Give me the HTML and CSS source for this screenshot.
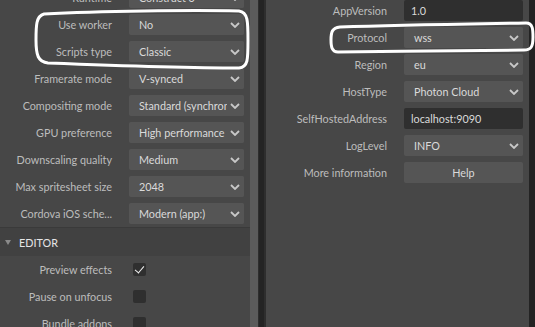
FILE: index.html
```html
<!DOCTYPE html>
<html>
<head>
    <title>Project properties</title>
    <link rel="stylesheet" href="styles.css">
</head>
<body>
    <div class="window">
        <!-- Left properties panel -->
        <div class="panel left">
            <div class="props">
                <div class="row"><span class="label">Runtime</span><div class="select">Construct 3</div></div>
                <div class="row"><span class="label">Use worker</span><div class="select">No</div></div>
                <div class="row"><span class="label">Scripts type</span><div class="select">Classic</div></div>
                <div class="row"><span class="label">Framerate mode</span><div class="select">V-synced</div></div>
                <div class="row"><span class="label">Compositing mode</span><div class="select">Standard (synchronous)</div></div>
                <div class="row"><span class="label">GPU preference</span><div class="select">High performance</div></div>
                <div class="row"><span class="label">Downscaling quality</span><div class="select">Medium</div></div>
                <div class="row"><span class="label">Max spritesheet size</span><div class="select">2048</div></div>
                <div class="row"><span class="label">Cordova iOS sche...</span><div class="select">Modern (app:)</div></div>
            </div>
            <div class="section-head"><span class="tri"></span>EDITOR</div>
            <div class="props checks">
                <div class="row"><span class="label">Preview effects</span><span class="check on"></span></div>
                <div class="row"><span class="label">Pause on unfocus</span><span class="check"></span></div>
                <div class="row"><span class="label">Bundle addons</span><span class="check"></span></div>
            </div>
        </div>
        <div class="scroll-track"></div>
        <div class="splitter"></div>

        <!-- Right properties panel -->
        <div class="panel right">
            <div class="props">
                <div class="row"><span class="label">AppVersion</span><div class="text">1.0</div></div>
                <div class="row"><span class="label">Protocol</span><div class="select">wss</div></div>
                <div class="row"><span class="label">Region</span><div class="select">eu</div></div>
                <div class="row"><span class="label">HostType</span><div class="select">Photon Cloud</div></div>
                <div class="row"><span class="label">SelfHostedAddress</span><div class="text">localhost:9090</div></div>
                <div class="row"><span class="label">LogLevel</span><div class="select">INFO</div></div>
                <div class="row"><span class="label">More information</span><div class="button">Help</div></div>
            </div>
        </div>
        <div class="edge"></div>

        <!-- hand drawn highlight marks -->
        <svg class="marks" viewBox="0 0 535 327" width="535" height="327">
            <path d="M44 14 C100 11 190 10 239 11 C248 12 248 22 248 40 C248 60 248 67 239 68 C180 68 100 65 48 63 C38 62 36 55 36 40 C36 26 36 16 44 14 Z"/>
            <path d="M340 27 C400 25 470 24 526 23 C533 23 533 30 533 37 C533 47 531 50 524 50 C470 51 400 51 338 52 C332 52 331 47 331 40 C331 32 332 28 340 27 Z"/>
        </svg>
    </div>
</body>
</html>
```

FILE: styles.css
```css
body {
    margin: 0;
    background: #464646;
    font-family: Lato, "Noto Sans", sans-serif;
    font-size: 10.8px;
}
.window {
    position: relative;
    display: flex;
    width: 535px;
    height: 327px;
    overflow: hidden;
}
.panel {
    background: #474747;
    overflow: hidden;
}
.left {
    width: 250px;
}
.right {
    width: 263px;
}
.scroll-track {
    width: 8px;
    background: #5b5b5b;
}
.splitter {
    width: 8px;
    background: #242424;
    border-left: 1px solid #2e2e2e;
    border-right: 2px solid #2e2e2e;
    box-sizing: border-box;
}
.edge {
    width: 6px;
    background: #232323;
}
.props {
    display: flex;
    flex-direction: column;
    gap: 6px;
}
.left .props:first-child {
    margin-top: -13px;
}
.row {
    display: grid;
    align-items: center;
    height: 21px;
}
.left .row {
    grid-template-columns: 112px 115px;
    column-gap: 17px;
}
.right .row {
    grid-template-columns: 121px 119px;
    column-gap: 17px;
}
.label {
    color: #bdbdbd;
    text-align: right;
    white-space: nowrap;
}
.select, .text, .button {
    height: 21px;
    line-height: 21px;
    border-radius: 2px;
    color: #dadada;
    white-space: nowrap;
    overflow: hidden;
    box-sizing: border-box;
}
.select {
    position: relative;
    background: #555555;
    padding: 0 18px 0 10px;
}
.select::after {
    content: "";
    position: absolute;
    right: 0;
    top: 0;
    width: 17px;
    height: 21px;
    background: #555555 url("data:image/svg+xml,%3Csvg xmlns='http://www.w3.org/2000/svg' width='10' height='6'%3E%3Cpath d='M1 1 L5 5 L9 1' fill='none' stroke='%23c8c8c8' stroke-width='1.8'/%3E%3C/svg%3E") no-repeat right 4px center;
}
.text {
    background: #2f2f2f;
    padding: 0 7px;
}
.button {
    background: #555555;
    text-align: center;
}
.section-head {
    margin-top: 3px;
    height: 29px;
    display: flex;
    align-items: center;
    background: #414141;
    border-top: 1px solid #3a3a3a;
    color: #e6e6e6;
    box-sizing: border-box;
}
.tri {
    width: 0;
    height: 0;
    margin: 0 8px 0 5px;
    border-left: 3px solid transparent;
    border-right: 3px solid transparent;
    border-top: 5px solid #8a8a8a;
}
.checks {
    margin-top: 3px;
}
.check {
    width: 13px;
    height: 13px;
    margin-left: 4px;
    background: #2f2f2f;
    border-radius: 2px;
}
.check.on::after {
    content: "";
    display: block;
    width: 4px;
    height: 8px;
    margin: 1px 0 0 4px;
    border-right: 1.5px solid #f2f2f2;
    border-bottom: 1.5px solid #f2f2f2;
    transform: rotate(40deg);
}
.marks {
    position: absolute;
    left: 0;
    top: 0;
    pointer-events: none;
}
.marks path {
    fill: none;
    stroke: #ffffff;
    stroke-width: 3;
    stroke-linecap: round;
}
```
